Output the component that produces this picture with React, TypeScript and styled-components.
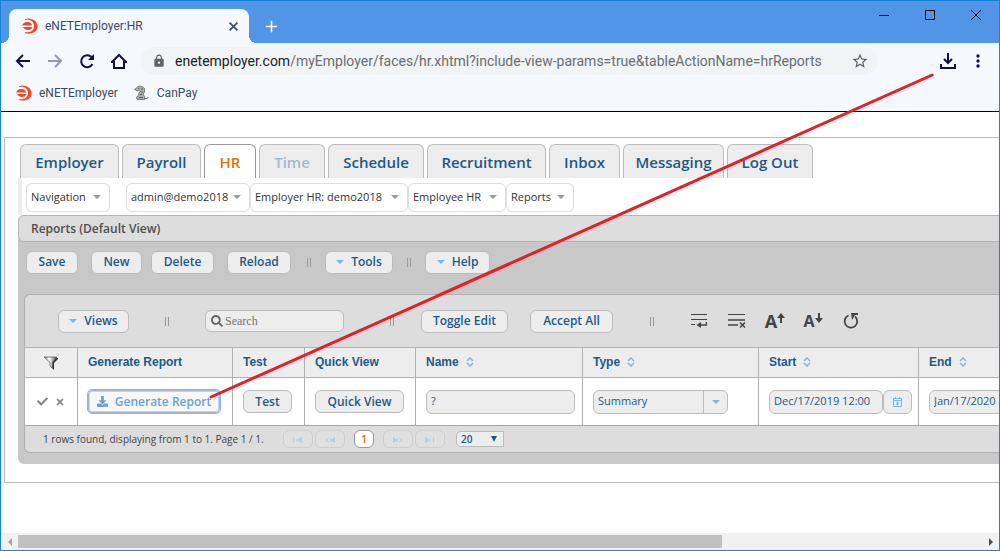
import React from "react";
import styled, { createGlobalStyle, css } from "styled-components";
import { FaCheck, FaDownload, FaSearch, FaTimes } from "react-icons/fa";
import { MdLock, MdStarBorder } from "react-icons/md";

const blue = "#1d5987";
const accent = "#79b7e7";
const trebuchet = `"Open Sans", "Noto Sans", sans-serif`;
const segoe = `Roboto, "Noto Sans", sans-serif`;

const GlobalStyle = createGlobalStyle`
  * { box-sizing: border-box; }
  body { margin: 0; background: #fff; font-family: ${trebuchet}; }
  button, input, select { font-family: inherit; margin: 0; }
  button { padding: 0; cursor: pointer; }
  svg { display: block; flex: none; }
`;

const BrowserWindow = styled.div`
  position: relative;
  display: flex;
  flex-direction: column;
  min-height: 100vh;
  border: 1px solid #1883d7;
  overflow: hidden;
`;

/* ---------- browser chrome ---------- */

const TitleBar = styled.header`
  display: flex;
  align-items: flex-end;
  height: 42px;
  padding-left: 8px;
  background: #5294e5;
`;

const PageTab = styled.div`
  position: relative;
  display: flex;
  align-items: center;
  width: 240px;
  height: 34px;
  padding: 0 8px 0 13px;
  border-radius: 8px 8px 0 0;
  background: #f5f8fd;
  color: #3b4a63;
  font: 12px/16px ${segoe};
  &::before, &::after {
    content: "";
    position: absolute;
    bottom: 0;
    width: 8px;
    height: 8px;
  }
  &::before { left: -8px; background: radial-gradient(circle at 0 0, transparent 8px, #f5f8fd 8px); }
  &::after { right: -8px; background: radial-gradient(circle at 100% 0, transparent 8px, #f5f8fd 8px); }
`;

const TabTitle = styled.span`
  flex: 1;
  margin-left: 7px;
`;

const ChromeButton = styled.button<{ $width?: number; $height?: number; $color?: string }>`
  display: flex;
  flex: none;
  align-items: center;
  justify-content: center;
  width: ${(p) => p.$width ?? 32}px;
  height: ${(p) => p.$height ?? 32}px;
  border: 0;
  background: none;
  color: ${(p) => p.$color ?? "#180c4a"};
`;

const WindowControls = styled.div`
  display: flex;
  align-self: flex-start;
  margin-left: auto;
`;

const AddressRow = styled.div`
  display: flex;
  align-items: center;
  height: 36px;
  padding: 0 7px 0 6px;
  background: #f5f8fd;
`;

const AddressBar = styled.div`
  display: flex;
  flex: 1;
  align-items: center;
  min-width: 0;
  height: 28px;
  margin: 0 54px 0 6px;
  padding: 0 9px 0 11px;
  border-radius: 14px;
  background: #f1f3f4;
  color: #5f6368;
`;

const AddressText = styled.a`
  flex: 1;
  overflow: hidden;
  margin-left: 9px;
  color: #6a6d72;
  font: 14px/20px ${segoe};
  text-decoration: none;
  white-space: nowrap;
  b { color: #202124; font-weight: 400; }
`;

const Bookmarks = styled.nav`
  display: flex;
  gap: 16px;
  height: 33px;
  padding: 6px 15px 0;
  border-bottom: 1px solid #000;
  background: #f5f8fd;
`;

const Bookmark = styled.a`
  display: flex;
  align-items: center;
  gap: 7px;
  height: 16px;
  color: #3b4a63;
  font: 12px/16px ${segoe};
  text-decoration: none;
`;

/* ---------- page ---------- */

const Viewport = styled.main`
  flex: 1;
  overflow: hidden;
  padding: 25px 0 48px 3px;
`;

const Sheet = styled.div`
  min-width: 1360px;
  padding: 6px 0 18px 13px;
  border: 1px solid #bbb;
`;

const AppTabs = styled.nav`
  display: flex;
  gap: 3px;
  padding-left: 2px;
`;

const AppTab = styled.a<{ $width: number; $active?: boolean; $disabled?: boolean }>`
  width: ${(p) => p.$width}px;
  height: 34px;
  border: 1px solid ${(p) => (p.$active ? "#999" : "#bbb")};
  border-bottom: 0;
  border-radius: 6px 6px 0 0;
  background: ${(p) => (p.$active ? "#fff" : "#ededed")};
  color: ${(p) => (p.$active ? "#e17009" : p.$disabled ? "#a2bad0" : blue)};
  font-size: 15px;
  font-weight: 600;
  line-height: 35px;
  text-align: center;
  text-decoration: none;
`;

const MenuBar = styled.div`
  display: flex;
  height: 37px;
  padding: 5px 0 0 4px;
  border-left: 4px solid #ededed;
`;

const MenuButton = styled.button<{ $width: number }>`
  display: flex;
  align-items: center;
  justify-content: space-between;
  width: ${(p) => p.$width}px;
  height: 29px;
  padding: 0 8px 2px 4px;
  border: 1px solid #ddd;
  border-radius: 6px;
  background: #fff;
  color: #333;
  font-size: 11px;
  white-space: nowrap;
  &:first-child { margin-right: 16px; }
`;

const Panel = styled.section`
  padding-bottom: 11px;
  border-radius: 6px;
  background: #c8c8c8;
`;

const PanelTitle = styled.h1`
  height: 27px;
  margin: 0;
  padding-left: 12px;
  border: 1px solid #b5b5b5;
  border-radius: 6px;
  background: #ddd;
  color: #4f4f4f;
  font-size: 12px;
  font-weight: 600;
  line-height: 26px;
`;

const Toolbar = styled.div`
  display: flex;
  align-items: center;
  height: 52px;
  padding: 0 8px 12px;
`;

const Button = styled.button<{ $width: number; $focused?: boolean }>`
  display: inline-flex;
  flex: none;
  align-items: center;
  justify-content: center;
  gap: 7px;
  width: ${(p) => p.$width}px;
  height: 23px;
  border: 1px solid #bbb;
  border-radius: 6px;
  background: #ededed;
  color: ${blue};
  font-size: 12px;
  font-weight: 600;
  line-height: 20px;
  white-space: nowrap;
  ${(p) =>
    p.$focused &&
    css`
      background: #f7f7f7;
      border-color: #a9b4c8;
      border-radius: 4px;
      color: #6aa2cf;
      outline: 1px solid #8db2ec;
      box-shadow: inset 0 0 0 1px #c3d4f0;
    `}
`;

const Divider = styled.span`
  flex: none;
  width: 4px;
  height: 9px;
  border: solid #999;
  border-width: 0 1px;
`;

const Grid = styled.div`
  margin-left: 6px;
  border: 1px solid #b0b0b0;
  border-right: 0;
  border-radius: 6px 0 0 6px;
  background: #ddd;
`;

const GridTools = styled.div`
  display: flex;
  align-items: center;
  height: 52px;
  padding-left: 33px;
`;

const Group = styled.div<{ $before?: number; $gap?: number }>`
  display: flex;
  align-items: center;
  gap: ${(p) => p.$gap ?? 0}px;
  margin-left: ${(p) => p.$before ?? 0}px;
`;

const SearchBox = styled.label`
  display: flex;
  align-items: center;
  gap: 2px;
  width: 139px;
  height: 22px;
  padding-left: 5px;
  border: 1px solid #bbb;
  border-radius: 6px;
  background: #ededed;
  color: #666;
  input {
    width: 100px;
    padding: 0;
    border: 0;
    outline: 0;
    background: none;
    font: 12px/16px "Liberation Serif", serif;
  }
  input::placeholder { color: #757575; }
`;

const IconButton = styled.button`
  display: flex;
  align-items: center;
  justify-content: center;
  width: 20px;
  height: 22px;
  border: 0;
  background: none;
  color: #444;
`;

const FontSizeButton = styled(IconButton)<{ $size: number }>`
  align-items: flex-end;
  font-size: ${(p) => p.$size}px;
  font-weight: 700;
  line-height: 22px;
  svg { align-self: flex-start; margin-top: 3px; }
`;

const Table = styled.table`
  width: 100%;
  border-collapse: separate;
  border-spacing: 0;
  table-layout: fixed;
  th, td {
    overflow: hidden;
    border-left: 1px solid #b0b0b0;
    border-top: 1px solid #b0b0b0;
    padding: 0 0 0 10px;
    text-align: left;
  }
  th:first-child, td:first-child { border-left: 0; padding: 0; }
  th {
    height: 30px;
    padding-bottom: 2px;
    background: #ededed;
    color: ${blue};
    font: 700 12px/26px "Liberation Sans", sans-serif;
  }
  td {
    height: 49px;
    border-bottom: 1px solid #a5a5a5;
    background: #fff;
  }
`;

const HeadLabel = styled.span`
  display: flex;
  align-items: center;
  gap: 7px;
`;

const Cell = styled.div<{ $center?: boolean }>`
  display: flex;
  align-items: center;
  justify-content: ${(p) => (p.$center ? "center" : "flex-start")};
  gap: ${(p) => (p.$center ? 7 : 0)}px;
`;

const Field = styled.input<{ $width: number }>`
  flex: none;
  width: ${(p) => p.$width}px;
  height: 24px;
  padding: 0 4px 2px;
  border: 1px solid #bbb;
  border-radius: 6px;
  background: #ededed;
  color: ${blue};
  font-size: 11px;
`;

const SelectBox = styled.span<{ $width: number; $small?: boolean }>`
  position: relative;
  display: inline-flex;
  width: ${(p) => p.$width}px;
  height: ${(p) => (p.$small ? 16 : 24)}px;
  border: 1px solid #bbb;
  border-radius: ${(p) => (p.$small ? "5px 0 0 5px" : "6px")};
  background: #ededed;
  select {
    appearance: none;
    width: 100%;
    padding: ${(p) => (p.$small ? "0 0 0 4px" : "0 0 2px 4px")};
    border: 0;
    background: none;
    color: ${blue};
    font-size: ${(p) => (p.$small ? 10 : 11)}px;
    font-weight: ${(p) => (p.$small ? 600 : 400)};
  }
`;

const SelectArrow = styled.span<{ $small?: boolean }>`
  position: absolute;
  top: 0;
  right: 0;
  bottom: 0;
  display: flex;
  align-items: center;
  justify-content: center;
  width: ${(p) => (p.$small ? 18 : 24)}px;
  border-left: ${(p) => (p.$small ? "0" : "1px solid #bbb")};
  pointer-events: none;
`;

const CalendarButton = styled(Button)`
  height: 24px;
`;

const Footer = styled.footer`
  display: flex;
  align-items: center;
  height: 26px;
  padding-left: 18px;
  color: #444;
  font-size: 10px;
  font-weight: 500;
`;

const PageSummary = styled.span`
  width: 240px;
  white-space: nowrap;
`;

const PageButton = styled.button<{ $current?: boolean }>`
  display: flex;
  align-items: center;
  justify-content: center;
  width: ${(p) => (p.$current ? 20 : 30)}px;
  height: 18px;
  margin: ${(p) => (p.$current ? "0 7px" : "0")};
  border: 1px solid ${(p) => (p.$current ? "#999" : "#cdcdcd")};
  border-radius: 6px;
  background: ${(p) => (p.$current ? "#fff" : "#e0e0e0")};
  color: #e17009;
  font-size: 10px;
  font-weight: 600;
`;

const ScrollTrack = styled.div`
  display: flex;
  align-items: center;
  height: 17px;
  background: #f1f1f1;
`;

const ScrollLane = styled.div`
  flex: 1;
`;

const ScrollThumb = styled.div`
  width: 73%;
  height: 13px;
  background: #c1c1c1;
`;

const Annotation = styled.svg`
  position: absolute;
  top: 0;
  left: 0;
  width: 100%;
  height: 100%;
  pointer-events: none;
`;

/* ---------- drawings ---------- */

const Logo = () => (
  <svg width="16" height="16" viewBox="0 0 16 16">
    <path d="M3 1C9-1 15 2 15.500 8S9 17 3 15v-1c6 1 9-2 9-6S9 1 3 2z" fill="#ee4824" />
    <path d="M0 7.500h10C9 4 7 4 5 4 3 4 1 5 0 7.500z" fill="#ee4824" />
    <path d="M1 9h9.500C9 13 3 13 1 9z" fill="#ee4824" />
  </svg>
);

const Serpent = () => (
  <svg width="16" height="16" viewBox="0 0 16 16">
    <path
      d="M.5 4.500L3 2.500 5 1l3 .5 2.500 2L10.500 7 9 9l1.500 2.500v3H3L2.500 12 5 10.500 4.500 9l2-3L5 5 3.500 6z"
      fill="#b0b0b0"
      stroke="#666"
      strokeWidth=".8"
    />
    <path d="M4 3.500h1M7 4h2M7 7h2M6 9.500h2M5 12.500h4M10.500 13.500h2l2-1" stroke="#555" strokeWidth=".9" fill="none" />
  </svg>
);

const Line = ({ d, size = 16, width = 2 }: { d: string; size?: number; width?: number }) => (
  <svg width={size} height={size} viewBox="0 0 16 16" fill="none" stroke="currentColor" strokeWidth={width}>
    <path d={d} />
  </svg>
);

const Caret = ({ color = accent, size = 8 }: { color?: string; size?: number }) => (
  <svg width={size} height="4" viewBox="0 0 8 4">
    <path d="M0 0h8L4 4z" fill={color} />
  </svg>
);

const SortIcon = () => (
  <svg width="8" height="10" viewBox="0 0 8 10" fill="none" stroke={accent} strokeWidth="1.5">
    <path d="M1 4l3-3 3 3M1 6l3 3 3-3" />
  </svg>
);

const Funnel = () => (
  <svg width="16" height="16" viewBox="0 0 16 16">
    <defs>
      <linearGradient id="steel">
        <stop offset="0" stopColor="#777" />
        <stop offset=".4" stopColor="#fff" />
        <stop offset="1" stopColor="#444" />
      </linearGradient>
    </defs>
    <path d="M4 3h11v1l-4 4v7L8 12V8z" fill="#333" />
    <path d="M1 2h13L9.500 7.500v5.500L7 11V7.500z" fill="url(#steel)" stroke="#555" strokeWidth=".7" />
  </svg>
);

const Calendar = () => (
  <svg width="9" height="10" viewBox="0 0 9 10" fill="none" stroke={accent}>
    <path d="M.5 1.500h8v8h-8zM0 3.500h9M2.500 0v2M6.500 0v2" />
    <path d="M4 5h1v3h-1z" fill={accent} />
  </svg>
);

const WrapIcon = () => (
  <svg width="16" height="16" viewBox="0 0 16 16" fill="none" stroke="currentColor">
    <path d="M0 1.500h16" />
    <path d="M0 6.500h16M0 11.500h4" strokeWidth="1.2" />
    <path d="M15.500 9v3H9" strokeWidth="1.5" />
    <path d="M10 9v6l-4.500-3z" fill="currentColor" stroke="none" />
  </svg>
);

const ClearIcon = () => (
  <svg width="18" height="16" viewBox="0 0 18 16" fill="none" stroke="currentColor">
    <path d="M0 1.500h17" />
    <path d="M0 7h17M0 12h10" strokeWidth="1.6" />
    <path d="M12 9.500l5 5M17 9.500l-5 5" strokeWidth="1.5" />
  </svg>
);

const SizeArrow = ({ down }: { down?: boolean }) => (
  <svg width="8" height="10" viewBox="0 0 8 10" fill="currentColor">
    <path d={down ? "M3 0h2v5h3L4 10 0 5h3z" : "M4 0l4 5H5v5H3V5H0z"} />
  </svg>
);

const ResetIcon = () => (
  <svg width="16" height="16" viewBox="0 0 16 16" fill="none" stroke="currentColor" strokeWidth="1.8">
    <path d="M5.500 2.500a6.300 6.300 0 1 0 6.500 1" />
    <path d="M8 0h7v2h-3L9 7z" fill="currentColor" stroke="none" />
  </svg>
);

const pagerPaths = {
  first: "M1 1h1v6h-1zM10 1v6L4 4z",
  prev: "M5 1.500L1 4l4 2.500V5.500L3 4l2-1.500zM11 1v6L5 4z",
  next: "M7 1.500L11 4 7 6.500V5.500L9 4 7 2.500zM1 1v6l6-3z",
  last: "M9 1h1v6h-1zM1 1v6l6-3z",
};

const Pager = ({ kind }: { kind: keyof typeof pagerPaths }) => (
  <PageButton aria-label={kind} disabled>
    <svg width="12" height="10" viewBox="0 -2 12 10" fill="#b5cde0">
      <path d={pagerPaths[kind]} />
    </svg>
  </PageButton>
);

/* ---------- data ---------- */

const tabs = [
  { label: "Employer", width: 99 },
  { label: "Payroll", width: 79 },
  { label: "HR", width: 52, active: true },
  { label: "Time", width: 66, disabled: true },
  { label: "Schedule", width: 96 },
  { label: "Recruitment", width: 119 },
  { label: "Inbox", width: 71 },
  { label: "Messaging", width: 101 },
  { label: "Log Out", width: 86 },
];

const menus = [
  { label: "Navigation", width: 84 },
  { label: "admin@demo2018", width: 124 },
  { label: "Employer HR: demo2018", width: 158 },
  { label: "Employee HR", width: 98 },
  { label: "Reports", width: 68 },
];

const columns = [
  { label: "Generate Report", width: 155 },
  { label: "Test", width: 72 },
  { label: "Quick View", width: 111 },
  { label: "Name", width: 167, sort: true },
  { label: "Type", width: 176, sort: true },
  { label: "Start", width: 160, sort: true },
  { label: "End", sort: true },
];

export default function App() {
  return (
    <BrowserWindow>
      <GlobalStyle />
      <TitleBar>
        <PageTab>
          <Logo />
          <TabTitle>eNETEmployer:HR</TabTitle>
          <ChromeButton aria-label="Close tab" $width={16} $height={16} $color="#3b4a63">
            <Line d="M1 1l14 14M15 1L1 15" size={9} width={3} />
          </ChromeButton>
        </PageTab>
        <ChromeButton aria-label="New tab" $width={44} $height={34} $color="#fff">
          <Line d="M8 1v14M1 8h14" size={13} />
        </ChromeButton>
        <WindowControls>
          <ChromeButton aria-label="Minimize" $width={46} $height={28}>
            <svg width="10" height="10" stroke="#000"><path d="M0 5.500h10" /></svg>
          </ChromeButton>
          <ChromeButton aria-label="Maximize" $width={46} $height={28}>
            <svg width="10" height="10" stroke="#000" fill="none"><path d="M.5.5h9v9h-9z" /></svg>
          </ChromeButton>
          <ChromeButton aria-label="Close window" $width={46} $height={28}>
            <svg width="10" height="10" stroke="#000"><path d="M0 0l10 10M10 0L0 10" /></svg>
          </ChromeButton>
        </WindowControls>
      </TitleBar>

      <AddressRow>
        <ChromeButton aria-label="Back"><Line d="M15 8H2M8 2L2 8l6 6" /></ChromeButton>
        <ChromeButton aria-label="Forward" disabled $color="#9a94b8">
          <Line d="M1 8h13M8 2l6 6-6 6" />
        </ChromeButton>
        <ChromeButton aria-label="Reload page">
          <svg width="16" height="16" viewBox="0 0 16 16" fill="none" stroke="currentColor" strokeWidth="2">
            <path d="M13.500 11A6 6 0 1 1 12.500 4" />
            <path d="M15 1v6H9z" fill="currentColor" stroke="none" />
          </svg>
        </ChromeButton>
        <ChromeButton aria-label="Home"><Line d="M0 9h3v6h10V9h3M1 9l7-7 7 7" /></ChromeButton>
        <AddressBar>
          <MdLock size={14} />
          <AddressText href="#">
            <b>enetemployer.com</b>/myEmployer/faces/hr.xhtml?include-view-params=true&amp;tableActionName=hrReports
          </AddressText>
          <MdStarBorder size={18} />
        </AddressBar>
        <ChromeButton aria-label="Downloads">
          <Line d="M8 0v9M4 6l4 4 4-4M1 11v4h14v-4" />
        </ChromeButton>
        <ChromeButton aria-label="Browser menu" $width={28}>
          <svg width="4" height="14" fill="currentColor">
            <circle cx="2" cy="2" r="1.700" /><circle cx="2" cy="7" r="1.700" /><circle cx="2" cy="12" r="1.700" />
          </svg>
        </ChromeButton>
      </AddressRow>
      <Bookmarks>
        <Bookmark href="#"><Logo />eNETEmployer</Bookmark>
        <Bookmark href="#"><Serpent />CanPay</Bookmark>
      </Bookmarks>

      <Viewport>
        <Sheet>
          <AppTabs>
            {tabs.map((t) => (
              <AppTab key={t.label} href="#" $width={t.width} $active={t.active} $disabled={t.disabled}>
                {t.label}
              </AppTab>
            ))}
          </AppTabs>
          <MenuBar>
            {menus.map((m) => (
              <MenuButton key={m.label} $width={m.width}>
                {m.label}
                <Caret color="#999" />
              </MenuButton>
            ))}
          </MenuBar>

          <Panel>
            <PanelTitle>Reports (Default View)</PanelTitle>
            <Toolbar>
              <Group $gap={13}>
                <Button $width={52}>Save</Button>
                <Button $width={51}>New</Button>
              </Group>
              <Group $before={9} $gap={13}>
                <Button $width={63}>Delete</Button>
                <Button $width={64}>Reload</Button>
              </Group>
              <Group $before={16} $gap={14}>
                <Divider />
                <Button $width={68}><Caret />Tools</Button>
                <Divider />
                <Button $width={65}><Caret />Help</Button>
              </Group>
            </Toolbar>

            <Grid>
              <GridTools>
                <Button $width={71}><Caret />Views</Button>
                <Group $before={36} $gap={36}>
                  <Divider />
                  <SearchBox>
                    <FaSearch size={12} />
                    <input aria-label="Search" placeholder="Search" />
                  </SearchBox>
                </Group>
                <Group $before={46} $gap={27}>
                  <Divider />
                  <Button $width={87}>Toggle Edit</Button>
                </Group>
                <Group $before={22} $gap={37}>
                  <Button $width={83}>Accept All</Button>
                  <Divider />
                </Group>
                <Group $before={35} $gap={18}>
                  <IconButton aria-label="Wrap text"><WrapIcon /></IconButton>
                  <IconButton aria-label="Clear filters"><ClearIcon /></IconButton>
                  <FontSizeButton aria-label="Larger text" $size={18}>A<SizeArrow /></FontSizeButton>
                  <FontSizeButton aria-label="Smaller text" $size={16}>A<SizeArrow down /></FontSizeButton>
                  <IconButton aria-label="Reset"><ResetIcon /></IconButton>
                </Group>
              </GridTools>

              <Table>
                <colgroup>
                  <col width="52" />
                  {columns.map((c) => <col key={c.label} width={c.width} />)}
                </colgroup>
                <thead>
                  <tr>
                    <th><Cell $center><Funnel /></Cell></th>
                    {columns.map((c) => (
                      <th key={c.label}>
                        <HeadLabel>{c.label}{c.sort && <SortIcon />}</HeadLabel>
                      </th>
                    ))}
                  </tr>
                </thead>
                <tbody>
                  <tr>
                    <td>
                      <Cell $center>
                        <FaCheck size={11} color="#888" />
                        <FaTimes size={10} color="#888" />
                      </Cell>
                    </td>
                    <td><Cell><Button $width={132} $focused><FaDownload size={11} />Generate Report</Button></Cell></td>
                    <td><Cell><Button $width={49}>Test</Button></Cell></td>
                    <td><Cell><Button $width={89}>Quick View</Button></Cell></td>
                    <td><Cell><Field $width={149} aria-label="Name" defaultValue="?" /></Cell></td>
                    <td>
                      <Cell>
                        <SelectBox $width={135}>
                          <select aria-label="Type"><option>Summary</option></select>
                          <SelectArrow><Caret /></SelectArrow>
                        </SelectBox>
                      </Cell>
                    </td>
                    <td>
                      <Cell>
                        <Field $width={114} aria-label="Start" defaultValue="Dec/17/2019 12:00" />
                        <CalendarButton $width={29} aria-label="Pick start date"><Calendar /></CalendarButton>
                      </Cell>
                    </td>
                    <td>
                      <Cell>
                        <Field $width={114} aria-label="End" defaultValue="Jan/17/2020 12:00" />
                        <CalendarButton $width={29} aria-label="Pick end date"><Calendar /></CalendarButton>
                      </Cell>
                    </td>
                  </tr>
                </tbody>
              </Table>

              <Footer>
                <PageSummary>1 rows found, displaying from 1 to 1. Page 1 / 1.</PageSummary>
                <Group $gap={2}>
                  <Pager kind="first" />
                  <Pager kind="prev" />
                  <PageButton $current>1</PageButton>
                  <Pager kind="next" />
                  <Pager kind="last" />
                </Group>
                <Group $before={11}>
                  <SelectBox $width={48} $small>
                    <select aria-label="Rows per page"><option>20</option></select>
                    <SelectArrow $small>
                      <svg width="6" height="6"><path d="M0 0h6L3 6z" fill={blue} /></svg>
                    </SelectArrow>
                  </SelectBox>
                </Group>
              </Footer>
            </Grid>
          </Panel>
        </Sheet>
      </Viewport>

      <ScrollTrack aria-hidden>
        <ChromeButton tabIndex={-1} $width={17} $height={17}>
          <svg width="4" height="8"><path d="M4 0v8L0 4z" fill="#a3a3a3" /></svg>
        </ChromeButton>
        <ScrollLane><ScrollThumb /></ScrollLane>
        <ChromeButton tabIndex={-1} $width={17} $height={17}>
          <svg width="4" height="8"><path d="M0 0v8l4-4z" fill="#505050" /></svg>
        </ChromeButton>
      </ScrollTrack>

      <Annotation aria-hidden>
        <line x1="210" y1="396" x2="93.300%" y2="74" stroke="#ed1c24" strokeWidth="3" strokeLinecap="round" />
      </Annotation>
    </BrowserWindow>
  );
}
